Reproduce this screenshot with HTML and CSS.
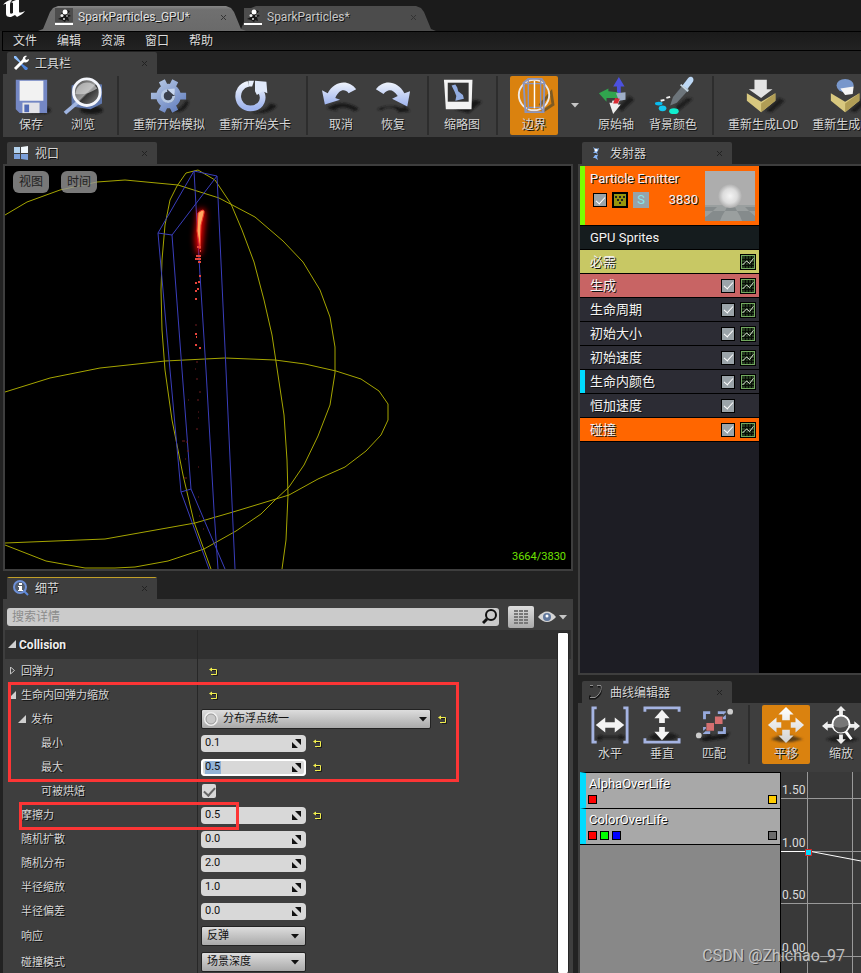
FILE: index.html
```html
<!DOCTYPE html>
<html lang="zh-CN">
<head>
<meta charset="utf-8">
<meta name="viewport" content="width=device-width, initial-scale=1">
<title>SparkParticles_GPU</title>
<link rel="stylesheet" href="styles.css">
</head>
<body>
<svg class="defs" aria-hidden="true">
  <defs>
    <linearGradient id="blue" x1="0" y1="0" x2="0" y2="1"><stop offset="0" stop-color="#eef3fc"/><stop offset="1" stop-color="#9fb4ee"/></linearGradient>
    <linearGradient id="steel" gradientUnits="userSpaceOnUse" x1="6" y1="2" x2="32" y2="38"><stop offset="0" stop-color="#b9cbe6"/><stop offset="1" stop-color="#5f7bbd"/></linearGradient>
    <linearGradient id="lens" x1="0" y1="0" x2="1" y2="1"><stop offset="0" stop-color="#444"/><stop offset=".5" stop-color="#999"/><stop offset=".55" stop-color="#333"/><stop offset="1" stop-color="#888"/></linearGradient>
    <linearGradient id="pale" x1="0" y1="0" x2="0" y2="1"><stop offset="0" stop-color="#fff"/><stop offset="1" stop-color="#d2d2d2"/></linearGradient>
    <radialGradient id="ball"><stop offset="0" stop-color="#f4f4f4"/><stop offset=".6" stop-color="#dcdcdc"/><stop offset="1" stop-color="#adadad"/></radialGradient>
    <filter id="soft" x="-50%" y="-50%" width="200%" height="200%"><feGaussianBlur stdDeviation="1"/></filter>
    <filter id="glow" x="-300%" y="-50%" width="700%" height="200%"><feGaussianBlur stdDeviation="3"/></filter>
    <symbol id="x" viewBox="0 0 7 7"><path d="M1 1l5 5M6 1l-5 5" stroke="currentColor" fill="none"/></symbol>
    <symbol id="spark" viewBox="0 0 18 18"><path d="M0 0h18v14H0z" fill="#4d4d4d"/><path d="M0 15h18v2H0z" fill="#fff"/><path d="M3 11l4-2-1-3 2-4 4 0 3 1-2 3 3 2-3 1 1 4-3-1-1 2-3-2z" fill="#161616"/><circle cx="10" cy="4" r="2.500" fill="#fff"/><circle cx="7" cy="7.500" r="1.500" fill="#eee"/><circle cx="12" cy="8" r="1" fill="#999"/><circle cx="9" cy="11" r="1" fill="#ddd"/><circle cx="13" cy="6" r=".8" fill="#888"/></symbol>
    <symbol id="reset" viewBox="0 0 9 9"><path d="M2 3.500h6.500v5H4" fill="none" stroke="#1c1c1c"/><path d="M1 2.500h6.500v5H2" fill="none" stroke="#f1ee4e"/><path d="M0 2.500l3-2v4z" fill="#f1ee4e"/></symbol>
    <symbol id="spin" viewBox="0 0 9 9"><path d="M3 0h6v6zM0 3v6h6z" fill="#111"/></symbol>
    <symbol id="down" viewBox="0 0 8 5"><path d="M0 0h8L4 4.500z" fill="currentColor"/></symbol>
    <symbol id="open" viewBox="0 0 8 8"><path d="M8 0v8H0z" fill="#cfcfcf"/></symbol>
    <symbol id="closed" viewBox="0 0 8 8"><path d="M2.500 0v7L6.500 3.500z" fill="none" stroke="#c4c4c4"/></symbol>
    <symbol id="graph" viewBox="0 0 16 16"><path d="M0 0h16v16H0z" fill="#000"/><path d="M1 1h14v14H1z" fill="#72a95f"/><path d="M2 2h12v12H2z" fill="#24391f"/><path d="M2 5.500h12M2 8.500h12M2 11.500h12M5.500 2v12M8.500 2v12M11.500 2v12" stroke="#070b06"/><path d="M2.500 11l4-4 3 2.500 4-5" fill="none" stroke="#e8f4e2"/></symbol>
  </defs>
</svg>

<header class="titlebar">
  <svg class="logo" viewBox="0 0 28 18" aria-label="Unreal"><path d="M3 5C5 2 8 0 12 0 10 2 10 4 10 6v6c0 2 1 2 3 1V3l-2-1 5-2h3v11c0 2 1 2 6 0-2 3-5 4-8 6l-2-2-4 2c-4 0-5-1-5-4V4c-1 0-2 0-3 1z" fill="#fff"/></svg>
  <nav class="docs">
    <a class="doc active" href="#gpu"><svg class="i18"><use href="#spark"/></svg><span>SparkParticles_GPU*</span><svg class="i7"><use href="#x"/></svg></a>
    <a class="doc" href="#cpu"><svg class="i18"><use href="#spark"/></svg><span>SparkParticles*</span><svg class="i7"><use href="#x"/></svg></a>
  </nav>
</header>
<nav class="menu"><button>文件</button><button>编辑</button><button>资源</button><button>窗口</button><button>帮助</button></nav>

<section class="tools">
  <div class="tab"><svg class="i16" viewBox="0 0 16 16"><path d="M1 1l2 0 5 6-1 1-6-5z" fill="#8ec0ff"/><path d="M8 8l7 5-1 2-2 0-5-6z" fill="#4f86dd"/><path d="M2 14L11 5" stroke="#fff" stroke-width="3"/><path d="M10 6c-1-3 1-6 4-5l-2 2 1 2 3-1c0 3-3 4-6 3z" fill="#fff"/></svg><h2>工具栏</h2><svg class="i7 close"><use href="#x"/></svg></div>
  <div class="toolbar">
    <button class="tool"><svg viewBox="0 0 40 40"><ellipse cx="28" cy="35" rx="13" ry="4" fill="#1a1a1a" filter="url(#soft)"/><path d="M4 3h33v35H8l-4-4z" fill="#7487c4"/><path d="M8 4h25v21H8z" fill="#f2f2f2"/><path d="M11 27h18v11H11z" fill="#e4e4e8"/><path d="M13 29h5v8h-5z" fill="#5069b4"/></svg><span>保存</span></button>
    <button class="tool"><svg viewBox="0 0 40 40"><ellipse cx="29" cy="35" rx="12" ry="4" fill="#161616" filter="url(#soft)"/><path d="M8 9l10-4 22 3v20l-12 6-20-3z" fill="#6078ae"/><path d="M1 38l13-11" stroke="#9fb4e0" stroke-width="4"/><circle cx="24" cy="16" r="14" fill="url(#lens)" stroke="#f4f6fc" stroke-width="3"/><path d="M12 18c1-14 17-16 23-6-8 5-14 7-23 6z" fill="#dcdcdc" opacity=".6"/></svg><span>浏览</span></button>
    <i class="sep"></i>
    <button class="tool"><svg viewBox="0 0 40 40"><path d="M22 34c8 3 12-3 16-9l3 1c-3 9-8 12-19 10z" fill="#171717" filter="url(#soft)"/><g stroke="url(#steel)" stroke-width="7"><path d="M12.500 4l4 8M26.500 4l-4 8M38 20.100h-9M1 20h9M12.500 36l4-8M26.500 36l-4-8"/></g><circle cx="19.500" cy="20" r="10" fill="#3a404c" stroke="url(#steel)" stroke-width="6"/><path d="M18 14a6 6 0 1 0 7 6" fill="none" stroke="#b7c9e4" stroke-width="3"/><path d="M18 13l8-1v8z" fill="#c7d6ee"/></svg><span>重新开始模拟</span></button>
    <button class="tool"><svg viewBox="0 0 40 40"><path d="M16 37c9 1 18-4 20-9l7 2c-4 6-15 10-27 7z" fill="#171717" filter="url(#soft)"/><path d="M13 7C-3 11 0 33 15 33c13 0 16-12 10-19" fill="none" stroke="url(#blue)" stroke-width="6"/><path d="M13 4h6l-2 6-4 0z" fill="#e8effb"/><path d="M20 4l12 1 1 12-5-2-6 4-2-4z" fill="#e0e9fa"/></svg><span>重新开始关卡</span></button>
    <i class="sep"></i>
    <button class="tool"><svg viewBox="0 0 40 40"><path d="M5 33l5-3c8-4 20-3 29 4l-5 2c-8-5-14-5-20-2l3 2z" fill="#181818" filter="url(#soft)"/><path d="M0 14l6 3C13 4 28 2 36 13l-8 4c-4-5-10-4-14 5l5 2L3 29z" fill="url(#blue)"/></svg><span>取消</span></button>
    <button class="tool"><svg viewBox="0 0 40 40"><path d="M3 34c7-4 18-5 26-1l4-2 5 5-12 1-2-3c-6-3-12-3-16 1z" fill="#181818" filter="url(#soft)"/><path d="M2 13C10 2 25 4 32 17l6-2-3 16-16-8 6-3c-5-7-10-8-15-2z" fill="url(#blue)"/></svg><span>恢复</span></button>
    <i class="sep"></i>
    <button class="tool"><svg viewBox="0 0 40 40"><path d="M12 34l22-10 7 2-14 12z" fill="#171717" filter="url(#soft)"/><path d="M1 3h30l-1 31H3z" fill="#f3f3f3"/><path d="M5 6h22v20H5z" fill="#343434"/><path d="M9 9l4-1 2 3 1 4 5 4 1 4-9 2 1-5-2-5z" fill="#92ace0"/></svg><span>缩略图</span></button>
    <i class="sep"></i>
    <button class="tool lead on"><svg viewBox="0 0 40 40"><path d="M26 30l12-14 2 13-12 8" fill="none" stroke="#7d5a22" stroke-width="3"/><circle cx="20" cy="19" r="16" fill="none" stroke="#eee8e4" stroke-width="2"/><path d="M9 6l5-4h14l3 4-1 31H11z" fill="none" stroke="#8b95bd" stroke-width="2"/><path d="M9 7h22M14 3v29h13V3M11 37l3-5M30 37l-3-5" fill="none" stroke="#8b95bd" stroke-width="1.500"/><path d="M20.500 4v29" stroke="#fff" stroke-width="1.500"/></svg><span>边界</span></button>
    <button class="more" aria-label="边界选项"><svg class="caret"><use href="#down"/></svg></button>
    <button class="tool"><svg viewBox="0 0 40 40"><path d="M22 32l12-12 5 4-13 12z" fill="#1a1a1a" filter="url(#soft)"/><path d="M21 19v-9h-4l6-10 6 10h-4v9z" fill="#4c51df"/><path d="M2 17l10-5v3l10 1v6H10v4z" fill="#31a44e"/><path d="M20 17l10-1v8l-7 1z" fill="#9faec7"/><path d="M16 25l8-1-2 5h3l-8 10-4-12h3z" fill="#eee"/><path d="M19 22l5 1-2 5h-5z" fill="#d92b34"/></svg><span>原始轴</span></button>
    <button class="tool"><svg viewBox="0 0 40 40"><path d="M23 31l12-9 6 1-16 13z" fill="#1b1b1b" filter="url(#soft)"/><path d="M17 30l3-9 11-13 6 5-13 14z" fill="#6d757b"/><path d="M30 9l6-8c3-3 7 0 5 4l-6 8z" fill="#bdd8f5"/><path d="M28 8l8 7" stroke="#c6d6e2" stroke-width="2"/><ellipse cx="5" cy="28" rx="4" ry="2" fill="#08bbef"/><ellipse cx="9" cy="33" rx="4" ry="3" fill="#13c6ee"/><ellipse cx="21" cy="36" rx="5" ry="3" fill="#11efcf"/><path d="M7 25l4-1M13 22l4-1" stroke="#f4f4f4" stroke-width="2"/></svg><span>背景颜色</span></button>
    <i class="sep"></i>
    <button class="tool"><svg viewBox="0 0 40 40"><path d="M23 36l14-14 6 3-14 12z" fill="#1c1c1c" filter="url(#soft)"/><path d="M3 17l15 9 15-9v8L18 37 3 25z" fill="#d8c87f"/><path d="M18 28l15-11v8L18 37z" fill="#b09d56"/><path d="M11 3h13v10h6L18 22 5 13h6z" fill="#e3e3e3"/></svg><span>重新生成LOD</span></button>
    <button class="tool"><svg viewBox="0 0 40 40"><path d="M23 36l14-14 6 3-14 12z" fill="#1c1c1c" filter="url(#soft)"/><path d="M3 17l15 9 15-9v8L18 37 3 25z" fill="#d8c87f"/><path d="M18 28l15-11v8L18 37z" fill="#b09d56"/><ellipse cx="18" cy="9" rx="9" ry="7" fill="#7897cb"/><path d="M13 12l14-2-1 8-8 1z" fill="#f5f5f5"/></svg><span>重新生成LOD</span></button>
  </div>
</section>

<main class="work">
  <div class="left">
    <section class="dock">
      <div class="tab"><svg class="i16" viewBox="0 0 16 16"><path d="M1 2h6v6H1z" fill="#b4d3ee"/><path d="M8 2l7-1v7H8z" fill="#f0f7fc"/><path d="M1 9h6v5H1zM8 9h7v6l-7-1z" fill="#7ba0da"/></svg><h2>视口</h2><svg class="i7 close"><use href="#x"/></svg></div>
      <div class="panel viewport">
        <svg class="scene" viewBox="5 166 566 403" preserveAspectRatio="xMinYMin slice" role="img" aria-label="粒子预览">
          <g class="sphere">
            <path d="M5 215L27 202 60 190 97 182 125 180 178 185 219 198 255 217 283 241 303 262 320 290 330 317 335 347 335 373 330 405 318 436 304 465 289 487 275 500 261 514 236 531 204 549 168 561 135 567 115 568 85 568 46 561 5 545"/>
            <path d="M211 569L194 522 183 475 172 420 165 370 162 330 161 290 162 260 165 225 170 200 177 186 186 173 198 170 215 180 231 204 242 230 254 262 264 300 272 335 278 375 284 415 287 460 288 495 286 540 282 569"/>
            <path d="M5 392L50 378 100 368 165 361 225 358 275 360 305 364 336 371 361 379 379 391 388 404 388 420 381 435 366 451 345 467 318 479 289 495 233 512 195 523 105 539 5 543"/>
          </g>
          <path class="box" d="M194 171L217 176 226 370 235 569M217 176L172 235 158 233 194 171 200 275 206 370 214 510 218 569M158 233L170 370 181 492 191 489 182 370 172 235M181 492L209 569M191 489L225 569"/>
          <path d="M200 212q4-4 3 5l-2 20-2 17-2-15z" stroke="#f00" stroke-width="4" fill="#f00" filter="url(#glow)"/>
          <path d="M198 213q7-6 6 0l-3 12-1 24-3-18z" fill="#ffa860" stroke="#f03828"/>
          <path class="dots" d="M197 247h4M200 251h1M196 256h5M195 259h6M198 262h3M199 276h2M195 283h2M198 282h2M195 291h2M197 289h2M195 299h2M195 334h2M196 337h1M195 345h2M199 348h2"/>
          <path class="faint" d="M195 325h2M196 362h2M195 369h1M196 379h2M199 392h2M197 400h2M188 400h1M198 412h1M198 418h1M196 429h2M182 441h3M186 442h2M187 451h2M185 459h1M198 467h1M184 478h3M198 497h1M199 516h1M203 529h1"/>
        </svg>
        <div class="vbtns"><button>视图</button><button>时间</button></div>
        <output class="count">3664/3830</output>
      </div>
    </section>

    <section class="dock">
      <div class="tab focus"><svg class="i16" viewBox="0 0 16 16"><path d="M11 11l4 4" stroke="#5e8bde" stroke-width="2"/><circle cx="7" cy="7" r="6" fill="#535d6c" stroke="#6d90d8" stroke-width="2"/><path d="M6 3h3v2H6zM5 6h4v4h1v1H5v-1h1V7H5z" fill="#fff"/></svg><h2>细节</h2><svg class="i7 close"><use href="#x"/></svg></div>
      <div class="panel details">
        <div class="searchbar">
          <label class="search"><input type="search" placeholder="搜索详情" aria-label="搜索详情"><svg viewBox="0 0 16 16"><circle cx="9" cy="6" r="5" fill="none" stroke="#111" stroke-width="2"/><path d="M5 10l-4 4" stroke="#111" stroke-width="3"/></svg></label>
          <button class="matrix" aria-label="属性矩阵"><svg viewBox="0 0 14 14"><path d="M0 1h14M0 4h14M0 7h14M0 10h14M0 13h14" stroke="#777" stroke-width="2" stroke-dasharray="4 1"/></svg></button>
          <button class="eye" aria-label="显示选项"><svg viewBox="0 0 18 12"><path d="M0 6Q9-5 18 6 9 16 0 6z" fill="#d5d5d5"/><circle cx="9" cy="6" r="4" fill="#61789d"/><circle cx="9" cy="5" r="1.500" fill="#fff"/></svg><svg class="caret"><use href="#down"/></svg></button>
        </div>
        <div class="props">
          <div class="prop head"><div class="name"><svg class="i8"><use href="#open"/></svg><h3>Collision</h3></div><div class="val"></div></div>
          <div class="prop"><div class="name"><svg class="i8"><use href="#closed"/></svg><span>回弹力</span></div><div class="val only"><svg class="i9"><use href="#reset"/></svg></div></div>
          <div class="prop"><div class="name"><svg class="i8"><use href="#open"/></svg><span>生命内回弹力缩放</span></div><div class="val only"><svg class="i9"><use href="#reset"/></svg></div></div>
          <div class="prop"><div class="name l1"><svg class="i8"><use href="#open"/></svg><label for="dist">发布</label></div><div class="val"><div class="pick wide"><select id="dist"><option>分布浮点统一</option></select><svg class="ring" viewBox="0 0 16 16"><circle cx="8" cy="8" r="6" fill="#c9c9c9" stroke="#eee" stroke-width="2"/><circle cx="8" cy="8" r="5" fill="none" stroke="#999"/></svg><svg class="caret"><use href="#down"/></svg></div><svg class="i9"><use href="#reset"/></svg></div></div>
          <div class="prop"><label class="name l2" for="min">最小</label><div class="val"><div class="num"><input id="min" value="0.1"><svg class="i9"><use href="#spin"/></svg></div><svg class="i9"><use href="#reset"/></svg></div></div>
          <div class="prop"><label class="name l2" for="max">最大</label><div class="val"><div class="num editing"><input id="max" value="0.5"><svg class="i9"><use href="#spin"/></svg></div><svg class="i9"><use href="#reset"/></svg></div></div>
          <div class="prop"><label class="name l2" for="bake">可被烘焙</label><div class="val"><input class="tick" id="bake" type="checkbox" checked></div></div>
          <div class="prop"><label class="name l0" for="fric">摩擦力</label><div class="val"><div class="num"><input id="fric" value="0.5"><svg class="i9"><use href="#spin"/></svg></div><svg class="i9"><use href="#reset"/></svg></div></div>
          <div class="prop"><label class="name l0" for="rs">随机扩散</label><div class="val"><div class="num"><input id="rs" value="0.0"><svg class="i9"><use href="#spin"/></svg></div></div></div>
          <div class="prop"><label class="name l0" for="rd">随机分布</label><div class="val"><div class="num"><input id="rd" value="2.0"><svg class="i9"><use href="#spin"/></svg></div></div></div>
          <div class="prop"><label class="name l0" for="sc">半径缩放</label><div class="val"><div class="num"><input id="sc" value="1.0"><svg class="i9"><use href="#spin"/></svg></div></div></div>
          <div class="prop"><label class="name l0" for="bi">半径偏差</label><div class="val"><div class="num"><input id="bi" value="0.0"><svg class="i9"><use href="#spin"/></svg></div></div></div>
          <div class="prop tall"><label class="name l0" for="resp">响应</label><div class="val"><div class="pick"><select id="resp"><option>反弹</option></select><svg class="caret"><use href="#down"/></svg></div></div></div>
          <div class="prop tall"><label class="name l0" for="mode">碰撞模式</label><div class="val"><div class="pick"><select id="mode"><option>场景深度</option></select><svg class="caret"><use href="#down"/></svg></div></div></div>
          <div class="scroll"></div>
          <div class="mark mark-scale"></div>
          <div class="mark mark-friction"></div>
        </div>
      </div>
    </section>
  </div>

  <div class="right">
    <section class="dock">
      <div class="tab"><svg class="i16" viewBox="0 0 16 16"><path d="M5 2l3 2 3-1-1 3-1 1 1 3-2-2-3 0 2-2zM7 10l3 0-1 2 1 3-3-2-2 0z" fill="#86b4f4"/><circle cx="8" cy="5" r="1.500" fill="#fff"/></svg><h2>发射器</h2><svg class="i7 close"><use href="#x"/></svg></div>
      <div class="panel emitters">
        <div class="emitter">
          <div class="ehead">
            <div class="einfo"><h3>Particle Emitter</h3>
              <div class="eline"><input class="mini" type="checkbox" checked aria-label="启用发射器"><svg class="i16" viewBox="0 0 16 16"><path d="M0 0h16v16H0z"/><path d="M2 2h12v12H2z" fill="#97960c"/><path d="M3 4h2v2H3zM7 4h2v2H7zM11 4h2v2h-2zM5 7h2v2H5zM9 7h2v2H9zM7 10h2v2H7z" fill="#222"/></svg><button class="solo">S</button><output>3830</output></div></div>
            <svg class="thumb" viewBox="0 0 50 50"><path d="M0 0h50v50H0z" fill="#adadad"/><path d="M0 34h50v16H0z" fill="#9a9f9f"/><path d="M0 36h12l-4 4H0zM22 36h8l2 4H20zM40 36h10v4h-6zM8 40h12l-3 5H2zM32 40h12l6 5H35zM0 46l2-1h15l-2 5H0zM35 45h15v5H37z" fill="#858b8c"/><circle cx="25" cy="25" r="12" fill="url(#ball)"/></svg>
          </div>
          <div class="mod type">GPU Sprites</div>
          <div class="mod need"><span>必需</span><svg class="i16"><use href="#graph"/></svg></div>
          <div class="mod spawn"><label for="m1">生成</label><input class="mini" id="m1" type="checkbox" checked><svg class="i16"><use href="#graph"/></svg></div>
          <div class="mod"><label for="m2">生命周期</label><input class="mini" id="m2" type="checkbox" checked><svg class="i16"><use href="#graph"/></svg></div>
          <div class="mod"><label for="m3">初始大小</label><input class="mini" id="m3" type="checkbox" checked><svg class="i16"><use href="#graph"/></svg></div>
          <div class="mod"><label for="m4">初始速度</label><input class="mini" id="m4" type="checkbox" checked><svg class="i16"><use href="#graph"/></svg></div>
          <div class="mod curve"><label for="m5">生命内颜色</label><input class="mini" id="m5" type="checkbox" checked><svg class="i16"><use href="#graph"/></svg></div>
          <div class="mod"><label for="m6">恒加速度</label><input class="mini" id="m6" type="checkbox" checked><i class="i16"></i></div>
          <div class="mod picked"><label for="m7">碰撞</label><input class="mini" id="m7" type="checkbox" checked><svg class="i16"><use href="#graph"/></svg></div>
        </div>
      </div>
    </section>

    <section class="dock">
      <div class="tab"><svg class="i16" viewBox="0 0 16 16"><path d="M2 2.500h3M10 2.500h3c1 5-1 10-6 12H2v-3" fill="none" stroke="#151515" stroke-width="2"/><path d="M2 1.500h3M9 1.500h4c1 4-1 9-6 12H2" fill="none" stroke="#8f8f8f"/></svg><h2>曲线编辑器</h2><svg class="i7 close"><use href="#x"/></svg></div>
      <div class="panel curves">
        <div class="toolbar small">
          <button class="tool"><svg viewBox="0 0 40 40"><path d="M5 34l6-4v2h19v-2l7 3-7 3v-2H11v3z" fill="#181818" filter="url(#soft)"/><path d="M6 2H2v36h4M34 2h4v36h-4" fill="none" stroke="#a5b4e2" stroke-width="3"/><path d="M5 20l10-8v5h10v-5l10 8-10 8v-5H15v5z" fill="#f3f3f3"/></svg><span>水平</span></button>
          <button class="tool"><svg viewBox="0 0 40 40"><path d="M6 33l7-4h18l7 3-8 4H12z" fill="#1c1c1c" filter="url(#soft)"/><path d="M2 6V2h36v4M2 34v4h36v-4" fill="none" stroke="#a5b4e2" stroke-width="3"/><path d="M20 4l8 9h-5v5h-6v-5h-5zM20 36l-8-9h5v-5h6v5h5z" fill="#f3f3f3"/></svg><span>垂直</span></button>
          <button class="tool"><svg viewBox="0 0 40 40"><path d="M5 35l12-6v3l20-4-4 6-22 3z" fill="#191919" filter="url(#soft)"/><path d="M10 14V7h6M24 7h7v7M10 22v6h6M31 22v6h-7" fill="none" stroke="#97aadd" stroke-width="3"/><path d="M4 31L35 6" stroke="#444" stroke-width="2"/><path d="M12 18h8v8h-8zM21 11h8v8h-8z" fill="#d46f70"/><circle cx="4" cy="31" r="3" fill="#ccc"/><circle cx="37" cy="6" r="3" fill="#ccc"/></svg><span>匹配</span></button>
          <i class="sep"></i>
          <button class="tool lead on"><svg viewBox="0 0 40 40"><path d="M4 35l9-4 13 0 12 4-12 3-12 0z" fill="#5d3f19" filter="url(#soft)"/><path d="M20 1l8 8h-4v6h-8V9h-4zM20 39l8-8h-4v-6h-8v6h-4zM1 20l9-8v5h5v6h-5v5zM39 20l-9-8v5h-5v6h5v5z" fill="url(#pale)"/></svg><span>平移</span></button>
          <button class="tool"><svg viewBox="0 0 40 40"><path d="M4 35l8-3h18l9 3-9 3H12z" fill="#1d1d1d" filter="url(#soft)"/><path d="M20 0l5 5h-3v5h-4V5h-3zM20 40l5-5h-3v-5h-4v5h-3zM0 21l6-5v3h6v4H6v3zM40 21l-6-5v3h-6v4h6v3z" fill="#eee"/><path d="M25 27l6 8" stroke="#fff" stroke-width="3"/><circle cx="20" cy="19" r="9" fill="#777" stroke="#fff" stroke-width="2"/><path d="M12 21q8 4 16-1-2 8-8 8t-8-7z" fill="#4a4a4a"/></svg><span>缩放</span></button>
        </div>
        <div class="curvearea">
          <div class="keys">
            <div class="key"><h3>AlphaOverLife</h3><div><i class="sw red"></i><i class="sw gold end"></i></div></div>
            <div class="key"><h3>ColorOverLife</h3><div><i class="sw red"></i><i class="sw lime"></i><i class="sw navy"></i><i class="sw grey end"></i></div></div>
          </div>
          <svg class="plot" viewBox="781 772 80 201" preserveAspectRatio="xMinYMin slice" role="img" aria-label="曲线">
            <path d="M807.500 772v201M852.500 772v201M781 798.500h80M781 851.500h80M781 903.500h80M781 956.500h80" stroke="#999" fill="none"/>
            <g class="ticks"><text x="782" y="794">1.50</text><text x="782" y="847">1.00</text><text x="782" y="899">0.50</text><text x="782" y="952">0.00</text></g>
            <path d="M781 851.500h30L861 861" fill="none" stroke="#fff"/>
            <path d="M805.500 849.500h6v6h-6z" fill="#00dcff" stroke="#d22"/>
          </svg>
        </div>
      </div>
    </section>
  </div>
</main>
<div class="watermark">CSDN @Zhichao_97</div>
</body>
</html>
```
FILE: styles.css
```css
* { box-sizing: border-box; }
body {
  margin: 0; height: 100vh; overflow: hidden; position: relative;
  display: flex; flex-direction: column;
  background: #222; color: #d6d6d6;
  font: 12px/16px Roboto, "Noto Sans CJK SC", sans-serif;
  text-shadow: 1px 1px 0 #111;
}
button, input, select { font: inherit; color: inherit; margin: 0; padding: 0; border: 0; background: none; text-shadow: inherit; }
h2, h3 { margin: 0; font: inherit; }
svg { display: block; flex: none; }
.defs { position: absolute; width: 0; height: 0; }
.i7 { width: 7px; height: 7px; }
.i8 { width: 8px; height: 8px; }
.i9 { width: 9px; height: 9px; }
.i16 { width: 16px; height: 16px; }
.i18 { width: 18px; height: 18px; }
.caret { width: 8px; height: 5px; }

.titlebar { flex: none; height: 31px; display: flex; background: #1b1b1b; }
.logo { width: 28px; height: 18px; }
.docs { display: flex; align-items: flex-end; margin-left: 10px; }
.doc {
  height: 25px; width: 208px; padding: 0 17px 3px; position: relative; z-index: 1;
  display: flex; align-items: center; gap: 5px; color: #c8c8c8; text-decoration: none;
}
.doc span { flex: 1; }
.doc .i7 { color: #333; margin-right: 2px; }
.doc::before {
  content: ""; position: absolute; inset: 0; z-index: -1; background: #4c4c4c;
  clip-path: polygon(0 100%, 5px 92%, 12px 24%, 15px 8%, 20px 0, calc(100% - 20px) 0, calc(100% - 15px) 8%, calc(100% - 12px) 24%, calc(100% - 5px) 92%, 100% 100%);
}
.doc.active { z-index: 2; color: #e0e0e0; }
.doc.active::before { background: linear-gradient(#878787, #707070 15%, #6a6a6a); }
.doc:not(.active) { width: 200px; margin-left: -10px; padding-left: 8px; }

.menu {
  flex: none; height: 20px; margin-left: 2px; padding-left: 10px; display: flex; gap: 20px;
  border: 1px solid #000; border-right: 0; background: linear-gradient(#1a1a1a, #222); color: #ddd;
}
.menu button { width: 24px; white-space: nowrap; }

.tab {
  width: 150px; height: 22px; margin-left: 4px; padding: 0 9px 0 6px;
  display: flex; align-items: center; gap: 6px;
  background: #3e3e3e; border-radius: 2px 2px 0 0; flex: none;
}
.tab h2 { flex: 1; padding-top: 1px; }
.tab .close { color: #222; }
.tab.focus { background: linear-gradient(#c2a028, #c2a028) top / 100% 1px no-repeat #3e3e3e; }

.tools { flex: none; margin: 1px 0 5px 3px; }
.toolbar { display: flex; height: 63px; padding: 2px 4px; gap: 4px; background: #3e3e3e; overflow: hidden; }
.tool {
  flex: none; min-width: 48px; height: 59px; padding: 1px 5px 0; display: flex; flex-direction: column;
  align-items: center; gap: 2px; white-space: nowrap; border-radius: 2px;
}
.tool svg { width: 38px; height: 38px; overflow: visible; }
.tool.on { background: #da820f; }
.tool.lead { margin-left: 3px; }
.sep { flex: none; width: 2px; margin: 0 5px 0 6px; background: #2d2d2d; }
.more { flex: none; width: 26px; display: grid; place-items: center; color: #c6c6c6; }

.work {
  flex: 1; min-height: 0; margin-left: 3px;
  display: grid; gap: 5px; grid-template-columns: minmax(0, 570fr) minmax(0, 283fr); grid-template-rows: minmax(0, 1fr);
}
.left, .right { display: grid; gap: 6px; min-height: 0; }
.left { grid-template-rows: minmax(0, 429fr) minmax(0, 396fr); }
.right { grid-template-rows: minmax(0, 533fr) minmax(0, 292fr); }
.dock { display: flex; flex-direction: column; min-height: 0; min-width: 0; }
.panel { flex: 1; min-height: 0; border: 2px solid #3e3e3e; background: #3e3e3e; overflow: hidden; }

.viewport { position: relative; background: #000; }
.scene { width: 100%; height: 100%; }
.sphere { fill: none; stroke: #a5a500; }
.box { fill: none; stroke: #3a3ebc; }
.dots { stroke: #e8443c; stroke-width: 2; }
.faint { stroke: #6e1c20; }
.vbtns { position: absolute; left: 8px; top: 5px; display: flex; gap: 12px; }
.vbtns button { width: 36px; height: 22px; border-radius: 6px; background: rgba(150, 150, 150, .8); color: #222; text-shadow: none; }
.count { position: absolute; right: 5px; bottom: 4px; font-size: 11px; color: #6ee000; text-shadow: none; }

.details { display: flex; flex-direction: column; border-bottom: 0; font-size: 11px; }
.searchbar { flex: none; height: 29px; padding: 5px 4px 2px 2px; display: flex; align-items: center; }
.search { flex: 1; height: 18px; display: flex; align-items: center; background: #cbcbcb; border-radius: 3px; padding: 0 1px 0 5px; }
.search input { flex: 1; min-width: 0; appearance: none; outline: 0; font-size: 12px; text-shadow: none; color: #222; }
.search input::placeholder { color: #8c8c8c; opacity: 1; }
.search svg { width: 16px; height: 16px; }
.matrix { width: 26px; height: 22px; margin: 0 4px 0 9px; display: grid; place-items: center; border-radius: 2px; background: linear-gradient(#ddd, #aaa); }
.matrix svg { width: 14px; height: 14px; }
.eye { display: flex; align-items: center; gap: 3px; color: #c6c6c6; }
.eye > svg:first-child { width: 18px; height: 12px; }

.props { flex: 1; min-height: 0; position: relative; overflow: hidden; }
.prop { display: grid; grid-template-columns: 192px minmax(0, 1fr); min-height: 24px; }
.prop.head { height: 29px; background: #303030; color: #eee; }
.prop.head h3 { font-size: 12px; font-weight: 700; }
.prop.head .name { gap: 3px; padding-top: 0; }
.prop.tall { min-height: 26px; }
.name { display: flex; align-items: center; gap: 5px; padding: 1px 0 0 3px; }
.name .i8 { margin-bottom: 2px; }
.name.l0 { padding-left: 16px; }
.name.l1 { padding-left: 13px; }
.name.l2 { padding-left: 36px; }
.val { display: flex; align-items: center; gap: 7px; padding-left: 3px; border-left: 1px solid #272727; }
.val.only { padding-left: 11px; }
.num, .pick { display: grid; align-items: center; text-shadow: none; color: #111; }
.num > *, .pick > * { grid-area: 1 / 1; }
.num { width: 105px; height: 17px; background: #d8d8d8; border-radius: 4px; }
.num input { width: 100%; padding-left: 4px; outline: 0; }
.num svg { justify-self: end; margin-right: 5px; }
.num.editing { background: #d8d8d8; box-shadow: inset 0 0 0 2px #fff; }
.num.editing input { background: linear-gradient(#93b3d6, #93b3d6) 4px 2px / 16px 13px no-repeat; }
.pick { width: 105px; height: 20px; }
.pick.wide { width: 230px; height: 20px; }
.pick select { width: 100%; height: 100%; padding: 0 20px 0 5px; appearance: none; border: 1px solid #222; border-radius: 2px; background: linear-gradient(#ddd, #a9a9a9); outline: 0; }
.pick.wide select { padding-left: 21px; }
.pick .caret { justify-self: end; margin-right: 7px; }
.pick.wide .caret { margin-right: 4px; }
.ring { width: 16px; height: 16px; margin-left: 2px; }
.tick { appearance: none; width: 14px; height: 14px; margin-left: 1px; border-radius: 2px; background: #d8d8d8; display: grid; place-items: center; }
.tick:checked::after { content: ""; width: 5px; height: 9px; margin-bottom: 2px; border: solid #666; border-width: 0 2px 2px 0; transform: rotate(42deg); }
.scroll { position: absolute; right: 2px; top: 2px; bottom: 0; width: 12px; background: #fff; border: solid #262626; border-width: 1px 1px 0; border-radius: 2px; }
.mark { position: absolute; border: 3px solid #fc3535; pointer-events: none; }
.mark-scale { left: 3px; top: 52px; width: 451px; height: 100px; }
.mark-friction { left: 14px; top: 172px; width: 220px; height: 28px; }

.emitters { background: #000; border-right: 0; font-size: 13px; color: #f4f4f4; }
.emitter { width: 179px; height: 100%; background: #1d1d24; }
.ehead { height: 59px; padding: 5px 4px 4px 5px; display: flex; background: #f60; border-left: 5px solid #7cfc00; }
.einfo { flex: 1; display: flex; flex-direction: column; gap: 5px; }
.eline { display: flex; align-items: center; gap: 5px; padding-left: 3px; }
.eline output { flex: 1; text-align: right; padding-right: 7px; }
.thumb { width: 50px; height: 50px; }
.solo { width: 16px; height: 16px; background: #97a3aa; color: #85e5ed; line-height: 16px; text-shadow: none; }
.mini { appearance: none; flex: none; width: 14px; height: 14px; border: 1px solid #000; background: #9ba4a9; display: grid; place-items: center; }
.mini:checked::after { content: ""; width: 4px; height: 8px; margin-bottom: 2px; border: solid #fff; border-width: 0 1px 1px 0; transform: rotate(42deg); }
.mod { height: 24px; padding: 0 3px 0 10px; display: flex; align-items: center; gap: 5px; border-top: 1px solid #000; background: #2c2c34; }
.mod label, .mod span { flex: 1; }
.mod.type { background: #151c1e; }
.mod.need { background: #c8c864; }
.mod.spawn { background: #c86464; }
.mod.curve { box-shadow: inset 5px 0 #00dcff; }
.mod.picked { background: #f60; height: 25px; border-bottom: 1px solid #000; }

.curves { border-top: 0; border-bottom: 0; border-right: 0; display: flex; flex-direction: column; }
.toolbar.small { height: 69px; padding-left: 6px; flex: none; }
.toolbar.small .sep { height: 59px; }
.toolbar.small .lead { margin-right: 3px; }
.curvearea { flex: 1; min-height: 0; display: grid; grid-template-columns: minmax(0, 201fr) minmax(0, 80fr); grid-template-rows: minmax(0, 1fr); }
.keys { background: #888; border-right: 1px solid #000; }
.key { height: 36px; padding: 3px 3px 0; border-top: 1px solid #000; border-left: 6px solid #00dcff; background: #a8a8a8; color: #fff; font-size: 13px; box-shadow: 0 1px #000; }
.key div { display: flex; gap: 3px; margin: 3px 0 0 -1px; }
.sw { width: 9px; height: 9px; border: 1px solid #000; }
.end { margin-left: auto; }
.red { background: #f00; }
.gold { background: #fc0; }
.lime { background: #0f0; }
.navy { background: #00f; }
.grey { background: #6b6b6b; }
.plot { width: 100%; height: 100%; background: #393939; }
.ticks { fill: #ddd; font-size: 12px; text-shadow: none; }
.watermark { position: absolute; right: 16px; bottom: 8px; font-size: 16px; line-height: 18px; color: rgba(215, 215, 215, .85); text-shadow: 1px 1px #444; pointer-events: none; }
```
